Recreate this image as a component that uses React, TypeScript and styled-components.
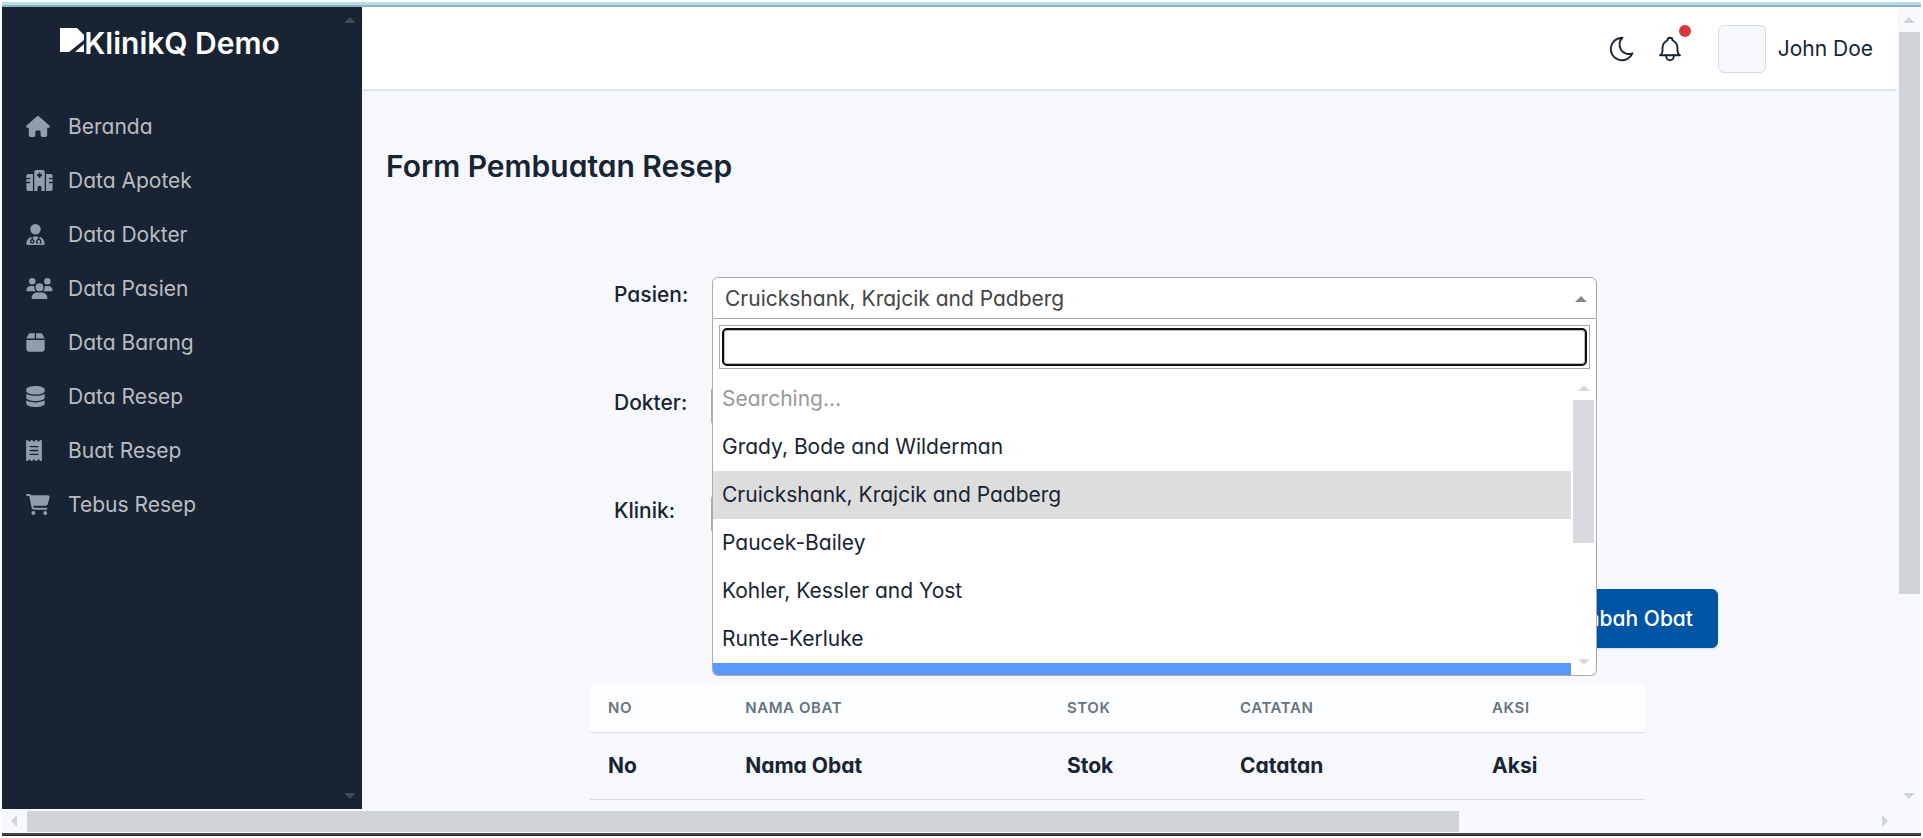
import React, { useState } from "react";
import styled, { createGlobalStyle } from "styled-components";
import {
  FaHouse,
  FaHospital,
  FaUserDoctor,
  FaUsers,
  FaBox,
  FaDatabase,
  FaReceipt,
  FaCartShopping,
} from "react-icons/fa6";

const GlobalStyle = createGlobalStyle`
  *, *::before, *::after { box-sizing: border-box; }
  body {
    margin: 0;
    background: #ffffff;
    color: #182433;
    font-family: Inter, "Liberation Sans", sans-serif;
    font-feature-settings: "cv03", "cv04", "cv11";
    font-size: 21px;
    line-height: 30px;
  }
  button, input, select { font: inherit; font-feature-settings: inherit; color: inherit; }
`;

const Frame = styled.div`
  display: flex;
  flex-direction: column;
  min-height: 100vh;
  padding: 2px;
`;

const TopStrip = styled.div`
  height: 5px;
  background: #b3dfe5;
  border-bottom: 2px solid #8fb3ba;
`;

const BottomStrip = styled.div`
  height: 3px;
  background: #434343;
  border-bottom: 1px solid #222222;
`;

const Viewport = styled.div`
  flex: 1;
  display: flex;
  background: #f6f8fc;
`;

const Sidebar = styled.aside`
  flex: none;
  width: 360px;
  display: flex;
  background: #182433;
  color: #babdc2;
`;

const SidebarBody = styled.div`
  flex: 1;
  padding: 0 24px;
`;

const Brand = styled.h1`
  display: flex;
  justify-content: center;
  margin: 0;
  padding-top: 18px;
  font-size: 30px;
  line-height: 36px;
  font-weight: 600;
  color: #ffffff;

  svg { margin-top: 3px; }
`;

const NavList = styled.ul`
  list-style: none;
  margin: 39px 0 0;
  padding: 0;
`;

const NavLink = styled.a`
  display: flex;
  align-items: center;
  height: 54px;
  color: inherit;
  text-decoration: none;
`;

const NavIcon = styled.span<{ $width: number }>`
  flex: none;
  display: flex;
  width: 42px;
  padding-bottom: 2px;
  color: #929dab;

  svg { height: 21px; width: ${(p) => p.$width}px; }
`;

const Main = styled.main`
  flex: 1;
  min-width: 0;
`;

const Topbar = styled.header`
  display: flex;
  align-items: center;
  justify-content: flex-end;
  height: 84px;
  padding-right: 24px;
  background: #ffffff;
  border-bottom: 1px solid #dadfe5;
  box-shadow: inset 0 -1px 0 #e9edf2;
`;

const IconButton = styled.button`
  position: relative;
  display: flex;
  padding: 0;
  margin-right: 18px;
  border: 0;
  background: none;
`;

const Badge = styled.span`
  position: absolute;
  top: -9px;
  right: -6px;
  width: 12px;
  height: 12px;
  border-radius: 50%;
  background: #d63939;
`;

const Profile = styled.a`
  display: flex;
  align-items: center;
  gap: 12px;
  margin-left: 15px;
  color: inherit;
  text-decoration: none;
`;

const Avatar = styled.span`
  width: 48px;
  height: 48px;
  border: 1px solid #d6dce3;
  border-radius: 6px;
  background: #f6f8fb;
`;

const PageTitle = styled.h2`
  margin: 57px 24px 93px;
  font-size: 30px;
  line-height: 36px;
  font-weight: 600;
`;

const Form = styled.form`
  margin: 0 179px 0 228px;
`;

const Fields = styled.div`
  display: grid;
  gap: 66px;
  padding: 0 121px 0 24px;
`;

const Field = styled.div`
  display: grid;
  grid-template-columns: 98px 1fr;
  align-items: start;
`;

const Label = styled.label`
  padding-top: 3px;
  font-weight: 500;
`;

const SelectAnchor = styled.div`
  position: relative;
`;

const ClosedSelect = styled.select`
  width: 100%;
  height: 42px;
  border: 1px solid #aaaaaa;
  border-radius: 6px;
  background: #ffffff;
  box-shadow: -1px 0 0 #aaaaaa;
`;

const SelectBox = styled.button`
  display: flex;
  align-items: center;
  justify-content: space-between;
  width: 100%;
  height: 42px;
  padding: 1px 9px 0 12px;
  border: 1px solid #aaaaaa;
  border-radius: 6px 6px 0 0;
  background: #ffffff;
  color: #444444;
  text-align: left;

  svg { color: #888888; }
`;

const Dropdown = styled.div`
  position: absolute;
  z-index: 2;
  top: 100%;
  left: 0;
  right: 0;
  border: 1px solid #aaaaaa;
  border-top: 0;
  border-radius: 0 0 6px 6px;
  background: #ffffff;
  overflow: hidden;
`;

const SearchArea = styled.div`
  padding: 6px;
`;

const SearchFrame = styled.div`
  padding: 2px;
  border: 1px solid #aaaaaa;
`;

const SearchInput = styled.input`
  display: block;
  width: 100%;
  height: 38px;
  padding: 0 6px;
  border: 2px solid #101010;
  border-radius: 5px;
  outline: 0;
  box-shadow: inset 0 0 0 1px #bbbbbb;
`;

const OptionsPane = styled.div`
  display: flex;
  height: 300px;
  overflow: hidden;
`;

const OptionList = styled.ul`
  flex: 1;
  list-style: none;
  margin: 0;
  padding: 0;
`;

const Option = styled.li<{ $state?: "muted" | "selected" | "active" }>`
  height: 48px;
  padding: 9px;
  color: ${(p) => (p.$state === "muted" ? "#999999" : p.$state === "active" ? "#ffffff" : "#182433")};
  background: ${(p) =>
    p.$state === "selected" ? "#dddddd" : p.$state === "active" ? "#5897fb" : "transparent"};
`;

const ButtonRow = styled.div`
  display: flex;
  justify-content: flex-end;
  margin: 54px 0 36px;
`;

const PrimaryButton = styled.button`
  height: 59px;
  padding: 0 24px;
  border: 1px solid #0054a6;
  border-radius: 6px;
  background: #0054a6;
  box-shadow: 0 1px 2px #18243322;
  color: #ffffff;
  font-weight: 500;
`;

const TableWrap = styled.div`
  padding-right: 73px;
`;

const Table = styled.table`
  width: 100%;
  table-layout: fixed;
  border-collapse: collapse;

  col:nth-child(1) { width: 13%; }
  col:nth-child(2) { width: 30.5%; }
  col:nth-child(3) { width: 16.4%; }
  col:nth-child(4) { width: 23.9%; }
`;

const HeadCell = styled.th`
  height: 48px;
  padding: 0 18px;
  border-bottom: 1px solid #dadde3;
  background: #fcfdfe;
  color: #667382;
  font-size: 15px;
  font-weight: 600;
  line-height: 24px;
  letter-spacing: 0.04em;
  text-align: left;
  text-transform: uppercase;
`;

const BodyCell = styled.th`
  height: 67px;
  padding: 0 18px;
  border-bottom: 1px solid #dadde3;
  font-weight: 700;
  text-align: left;
`;

const VerticalBar = styled.div<{ $color: string; $width: number }>`
  flex: none;
  display: flex;
  flex-direction: column;
  align-items: center;
  width: ${(p) => p.$width}px;
  padding: 10px 0;
  color: ${(p) => p.$color};
`;

const VerticalTrack = styled.div`
  flex: 1;
  width: 21px;
  margin: 9px 0;
`;

const VerticalThumb = styled.div<{ $size: number }>`
  height: ${(p) => p.$size}%;
  background: currentColor;
`;

const BottomBar = styled.div`
  display: flex;
  align-items: center;
  height: 24px;
  padding: 0 33px 0 9px;
  background: #f6f8fc;
  color: #d0d3d8;
`;

const HorizontalTrack = styled.div`
  flex: 1;
  height: 21px;
  margin: 0 10px;
`;

const HorizontalThumb = styled.div`
  width: 77.6%;
  height: 100%;
  background: currentColor;
`;

const arrowPaths = {
  up: "M0 6 6 0l6 6z",
  down: "M0 0h12L6 6z",
  left: "M6 0v12L0 6z",
  right: "M0 0l6 6-6 6z",
};

function Arrow({ dir }: { dir: keyof typeof arrowPaths }) {
  const flat = dir === "up" || dir === "down";
  const w = flat ? 12 : 6;
  const h = flat ? 6 : 12;
  return (
    <svg width={w} height={h} viewBox={`0 0 ${w} ${h}`} fill="currentColor" aria-hidden="true">
      <path d={arrowPaths[dir]} />
    </svg>
  );
}

function VScroll({ color, size = 0, width = 24 }: { color: string; size?: number; width?: number }) {
  return (
    <VerticalBar $color={color} $width={width} aria-hidden="true">
      <Arrow dir="up" />
      <VerticalTrack>{size > 0 && <VerticalThumb $size={size} />}</VerticalTrack>
      <Arrow dir="down" />
    </VerticalBar>
  );
}

const strokeProps = {
  width: 30,
  height: 30,
  viewBox: "0 0 24 24",
  fill: "none",
  stroke: "currentColor",
  strokeWidth: 1.5,
  strokeLinecap: "round" as const,
  strokeLinejoin: "round" as const,
};

const navItems = [
  { label: "Beranda", Icon: FaHouse, width: 24 },
  { label: "Data Apotek", Icon: FaHospital, width: 27 },
  { label: "Data Dokter", Icon: FaUserDoctor, width: 19 },
  { label: "Data Pasien", Icon: FaUsers, width: 27 },
  { label: "Data Barang", Icon: FaBox, width: 19 },
  { label: "Data Resep", Icon: FaDatabase, width: 19 },
  { label: "Buat Resep", Icon: FaReceipt, width: 16 },
  { label: "Tebus Resep", Icon: FaCartShopping, width: 24 },
];

const options = [
  "Grady, Bode and Wilderman",
  "Cruickshank, Krajcik and Padberg",
  "Paucek-Bailey",
  "Kohler, Kessler and Yost",
  "Runte-Kerluke",
];

const columns = ["No", "Nama Obat", "Stok", "Catatan", "Aksi"];

export default function App() {
  const [query, setQuery] = useState("");
  const selected = options[1];

  return (
    <>
      <GlobalStyle />
      <Frame>
        <TopStrip />
        <Viewport>
          <Sidebar>
            <SidebarBody>
              <Brand>
                <svg width="24" height="24" viewBox="0 0 24 24" fill="#ffffff" aria-hidden="true">
                  <path d="M0 0h17l7 7v5L9 24H0z" />
                  <path d="M24 16v8h-9z" />
                </svg>
                KlinikQ Demo
              </Brand>
              <nav>
                <NavList>
                  {navItems.map(({ label, Icon, width }) => (
                    <li key={label}>
                      <NavLink href="#">
                        <NavIcon $width={width}>
                          <Icon />
                        </NavIcon>
                        {label}
                      </NavLink>
                    </li>
                  ))}
                </NavList>
              </nav>
            </SidebarBody>
            <VScroll color="#404a55" />
          </Sidebar>

          <Main>
            <Topbar>
              <IconButton type="button" aria-label="Mode gelap">
                <svg {...strokeProps}>
                  <path d="M12 3c.132 0 .263 0 .393 0a7.500 7.500 0 0 0 7.920 12.446a9 9 0 1 1 -8.313 -12.454z" />
                </svg>
              </IconButton>
              <IconButton type="button" aria-label="Notifikasi">
                <svg {...strokeProps}>
                  <path d="M10 5a2 2 0 1 1 4 0a7 7 0 0 1 4 6v3a4 4 0 0 0 2 3h-16a4 4 0 0 0 2 -3v-3a7 7 0 0 1 4 -6" />
                  <path d="M9 17v1a3 3 0 0 0 6 0v-1" />
                </svg>
                <Badge />
              </IconButton>
              <Profile href="#">
                <Avatar />
                John Doe
              </Profile>
            </Topbar>

            <PageTitle>Form Pembuatan Resep</PageTitle>

            <Form onSubmit={(e) => e.preventDefault()}>
              <Fields>
                <Field>
                  <Label htmlFor="pasien">Pasien:</Label>
                  <SelectAnchor>
                    <SelectBox id="pasien" type="button" aria-haspopup="listbox" aria-expanded="true">
                      {selected}
                      <Arrow dir="up" />
                    </SelectBox>
                    <Dropdown>
                      <SearchArea>
                        <SearchFrame>
                          <SearchInput
                            type="search"
                            aria-label="Cari pasien"
                            value={query}
                            onChange={(e) => setQuery(e.target.value)}
                          />
                        </SearchFrame>
                      </SearchArea>
                      <OptionsPane>
                        <OptionList role="listbox" aria-label="Pasien">
                          <Option $state="muted">Searching…</Option>
                          {options.map((name) => (
                            <Option
                              key={name}
                              role="option"
                              aria-selected={name === selected}
                              $state={name === selected ? "selected" : undefined}
                            >
                              {name}
                            </Option>
                          ))}
                          <Option role="option" aria-selected="false" $state="active" />
                        </OptionList>
                        <VScroll color="#d9dade" size={57} width={25} />
                      </OptionsPane>
                    </Dropdown>
                  </SelectAnchor>
                </Field>
                <Field>
                  <Label htmlFor="dokter">Dokter:</Label>
                  <ClosedSelect id="dokter" />
                </Field>
                <Field>
                  <Label htmlFor="klinik">Klinik:</Label>
                  <ClosedSelect id="klinik" />
                </Field>
              </Fields>

              <ButtonRow>
                <PrimaryButton type="button">Tambah Obat</PrimaryButton>
              </ButtonRow>

              <TableWrap>
                <Table>
                  <colgroup>
                    {columns.map((c) => (
                      <col key={c} />
                    ))}
                  </colgroup>
                  <thead>
                    <tr>
                      {columns.map((c) => (
                        <HeadCell key={c} scope="col">
                          {c}
                        </HeadCell>
                      ))}
                    </tr>
                  </thead>
                  <tbody>
                    <tr>
                      {columns.map((c) => (
                        <BodyCell key={c}>{c}</BodyCell>
                      ))}
                    </tr>
                  </tbody>
                </Table>
              </TableWrap>
            </Form>
          </Main>
          <VScroll color="#d0d3d8" size={74.7} />
        </Viewport>
        <BottomBar aria-hidden="true">
          <Arrow dir="left" />
          <HorizontalTrack>
            <HorizontalThumb />
          </HorizontalTrack>
          <Arrow dir="right" />
        </BottomBar>
        <BottomStrip />
      </Frame>
    </>
  );
}
